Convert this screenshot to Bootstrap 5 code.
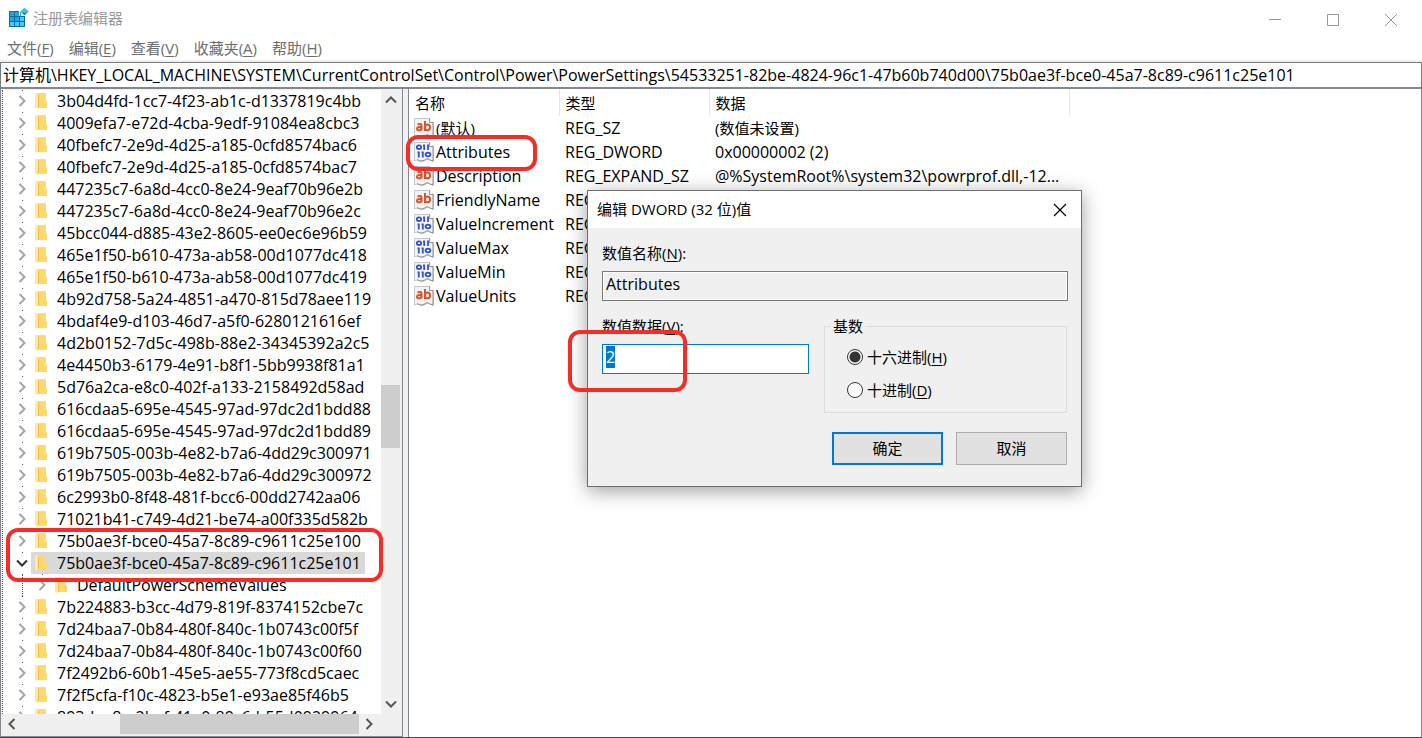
<!DOCTYPE html>
<html lang="zh-CN">
<head>
<meta charset="utf-8">
<meta name="viewport" content="width=device-width, initial-scale=1">
<title>注册表编辑器</title>
<link href="https://cdn.jsdelivr.net/npm/bootstrap@5.3.0/dist/css/bootstrap.min.css" rel="stylesheet">
<style>
  body { font-family: "Open Sans", "Noto Sans CJK SC", sans-serif; font-size: 15px; line-height: 22px; color: #000; background: #fff; }
  button { color: inherit; }
  u { text-underline-offset: 2px; }
  .title-row { height: 36px; padding: 0 2px 0 8px; color: #999; }
  .win-btn { width: 58px; height: 36px; border: 0; background: none; padding: 0; }
  .menu-row { height: 26px; padding-left: 7px; gap: 15px; border-bottom: 2px solid #f0f0f0; }
  .menu-row a { color: #6d6d6d; text-decoration: none; }
  .address { height: 27px; border: 1px solid #7a7a7a; border-bottom: 2px solid #828790; padding: 0 2px 2px; width: 100%; outline: 0; font-size: 16px; }
  .panes { background: #f0f0f0; gap: 5px; border-bottom: 1px solid #4a4c55; min-height: 0; }
  .tree-pane { flex: 0 0 403px; border: 1px solid #828790; border-top: 0; background: #f0f0f0; padding: 1px 1px 2px 1px; font-size: 16px; }
  .tree-body, .tree-view { min-height: 0; }
  .tree-view { background: #fff; border-left: 1px dotted #555; }
  .tree-item { height: 22px; flex: none; padding-left: 13px; position: relative; white-space: nowrap; }
  .tree-item::before { content: ""; position: absolute; left: 19px; top: 0; width: 1px; height: 1px; background: #555; }
  .tree-item.nested { padding-left: 33px; }
  .tree-item.nested::before { height: 22px; background: none; border-left: 1px dotted #555; }
  .tree-item.nested::after { content: ""; position: absolute; left: 39px; top: 0; width: 1px; height: 1px; background: #555; }
  .tree-item svg { flex: none; }
  .tree-label { margin-left: 6px; padding: 0 4px; }
  .tree-node { height: 22px; padding-left: 4px; margin-left: 3px; }
  .tree-node.chosen { background: #d9d9d9; }
  .bar-v { width: 19px; margin-right: 1px; }
  .bar-h { height: 20px; margin-right: 23px; }
  .arrow-btn { border: 0; background: none; padding: 0; width: 19px; height: 20px; display: grid; place-items: center; flex: none; }
  .thumb { background: #cdcdcd; }
  .list-pane { border-left: 1px solid #828790; border-right: 1px solid #828790; background: #fff; min-width: 0; }
  .values { table-layout: fixed; width: 100%; }
  .values th { font-weight: 400; height: 27px; padding: 1px 6px 0; border-right: 1px solid #e5e5e5; }
  .values th:last-child { border-right: 0; }
  .values td { height: 24px; padding: 0 6px; white-space: nowrap; font-size: 16px; }
  .values td:first-child { padding: 0 5px; }
  .values td.cn { font-size: 15px; }
  .values svg { margin-right: 2px; flex: none; }
  .ring { position: absolute; border: 4px solid #f42d27; border-radius: 12px; pointer-events: none; z-index: 5; }
  .ring-tree { left: 5px; top: 439px; width: 377px; height: 54px; }
  .ring-row { left: -3px; top: 46px; width: 131px; height: 36px; }
  .ring-data { left: -20px; top: 139px; width: 119px; height: 62px; }
  .dlg { position: absolute; left: 178px; top: 101px; width: 495px; background: #f0f0f0; border: 1px solid #6e6e6e; box-shadow: 0 4px 18px rgba(0,0,0,.38); z-index: 3; }
  .dlg-title { height: 37px; background: #fff; padding: 0 0 2px 9px; }
  .dlg-close { width: 43px; height: 34px; border: 0; background: none; padding: 0; }
  .dlg-body { padding: 14px 13px 21px 14px; }
  .box { display: block; width: 100%; height: 30px; margin-top: 7px; border: 1px solid #7a7a7a; padding: 0 3px 4px; border-radius: 0; outline: 0; font-size: 16px; }
  .box-name { background: #f0f0f0; box-shadow: inset 0 0 0 1px #fff; }
  .box-data { border-color: #0078d7; background: #fff; color: #000; }
  .box-data::selection { background: #0078d7; color: #fff; }
  .data-row { margin-top: 14px; padding-right: 1px; }
  .data-col { width: 207px; }
  .radix { width: 243px; height: 98px; border: 1px solid #dcdcdc; padding: 3px 22px 0; }
  .radix legend { float: none; width: auto; font-size: 15px; line-height: 22px; margin: 0 0 0 -16px; padding: 0 2px; }
  .radix label { height: 33px; display: flex; align-items: center; gap: 4px; }
  .radix input { appearance: none; width: 16px; height: 16px; margin: 0; border: 1px solid #333; border-radius: 50%; background: #fff; }
  .radix input:checked { background: radial-gradient(circle, #333 5px, #fff 6px); }
  .push-row { margin-top: 19px; gap: 13px; padding-right: 1px; }
  .push { width: 111px; height: 33px; border: 1px solid #adadad; background: #e1e1e1; padding: 0 0 2px; }
  .push-main { border: 2px solid #0078d7; }
</style>
</head>
<body>
<svg class="d-none">
  <symbol id="i-right" viewBox="0 0 9 12"><path d="M1.500 1l5 5-5 5" fill="none" stroke="#a6a6a6" stroke-width="2"/></symbol>
  <symbol id="i-folder" viewBox="0 0 12 18"><path d="M3 1h8v8.500h1V16H3z" fill="#ffd96b"/><path d="M0 1h3l1 2v12l-2 2-2-1z" fill="#ffe9a2"/><path d="M3 3l1-1v13l-1 1z" fill="#e9bd52"/></symbol>
  <symbol id="i-paper" viewBox="0 0 20 20"><path d="M.5.500h15l4 4v15l-3-1-3-1.500-3 2-4 .5-3-1.500-3 1z" fill="#f4f4f4" stroke="#c3c7ca"/><path d="M15.500.500v4h4" fill="#fff" stroke="#8e959b"/><path d="M19 5v14l-3-1-3-1.500-3 2-4 .5-3-1.500" fill="none" stroke="#8f959a"/></symbol>
  <symbol id="i-text" viewBox="0 0 20 20"><use href="#i-paper"/><g fill="none" stroke="#d9532c" stroke-width="2"><path d="M3.500 6.500q4-1.500 4 1v5M7.500 9q-4.500-.3-4.500 1.700t2.500 1.500q2-.5 2-2.500M11 3v10M11 8q1-1.800 3-1.500 2 .5 2 2.900T14 12.300q-2 .2-3-1.300"/></g></symbol>
  <symbol id="i-bin" viewBox="0 0 20 20"><use href="#i-paper"/><g fill="none" stroke="#2f50d8" stroke-width="1.800"><ellipse cx="5" cy="5.200" rx="2.200" ry="1.800"/><path d="M10.200 2.500v5.500M14 2.500v5.500M9 3.400h1M13 3.400h1M4.800 9.500v6M8.800 9.500v6M3.500 10.400h1M7.500 10.400h1"/><ellipse cx="14" cy="12.500" rx="2.400" ry="1.900"/></g></symbol>
</svg>

<div class="d-flex flex-column vh-100 overflow-hidden">
  <header>
    <div class="title-row d-flex align-items-center">
      <svg width="21" height="22" viewBox="0 0 21 22"><path d="M1 4h16v16H1z" fill="#0a6e9e"/><path d="M2 5h4v4H2zM7 5h4v4H7zM2 10h4v4H2zM7 10h4v4H7z" fill="#22a7e0"/><path d="M2 15h4v4H2zM7 15h4v4H7zM12 10h4v4h-4zM12 15h4v4h-4z" fill="#4cc9f5"/><path d="M11 1h6v8h-6z" fill="#fff"/><path d="M12 5h1v4h-1z" fill="#29a9dc"/><path d="M16.500 1l4 3.500-4 4-4-4z" fill="#1c86b8"/><path d="M16.500 1l4 3.500-4 1.500-4-1.500z" fill="#4fbde6"/></svg>
      <span class="me-auto ps-1">注册表编辑器</span>
      <button class="win-btn" aria-label="最小化"><svg width="14" height="14"><path d="M1 6.500h12" stroke="#999"/></svg></button>
      <button class="win-btn" aria-label="最大化"><svg width="14" height="14"><path d="M1.500 1.500h11v11h-11z" fill="none" stroke="#999"/></svg></button>
      <button class="win-btn" aria-label="关闭"><svg width="14" height="14"><path d="M1 1l12 12M13 1L1 13" stroke="#999"/></svg></button>
    </div>
    <nav class="menu-row d-flex align-items-center">
      <a href="#">文件(<u>F</u>)</a><a href="#">编辑(<u>E</u>)</a><a href="#">查看(<u>V</u>)</a><a href="#">收藏夹(<u>A</u>)</a><a href="#">帮助(<u>H</u>)</a>
    </nav>
    <input class="address d-block" type="text" aria-label="地址" value="计算机\HKEY_LOCAL_MACHINE\SYSTEM\CurrentControlSet\Control\Power\PowerSettings\54533251-82be-4824-96c1-47b60b740d00\75b0ae3f-bce0-45a7-8c89-c9611c25e101">
  </header>

  <main class="panes d-flex flex-grow-1">
    <section class="tree-pane d-flex flex-column position-relative">
      <div class="tree-body d-flex flex-grow-1">
        <div class="tree-view flex-grow-1 d-flex flex-column overflow-hidden" id="tree" role="tree"></div>
        <div class="bar-v d-flex flex-column">
          <button class="arrow-btn" aria-label="向上"><svg width="12" height="8"><path d="M1 6.500l5-5 5 5" fill="none" stroke="#555" stroke-width="2"/></svg></button>
          <div style="flex:275"></div><div class="thumb" style="flex:62"></div><div style="flex:246"></div>
          <button class="arrow-btn" aria-label="向下"><svg width="12" height="8"><path d="M1 1.500l5 5 5-5" fill="none" stroke="#555" stroke-width="2"/></svg></button>
        </div>
      </div>
      <div class="bar-h d-flex">
        <button class="arrow-btn" aria-label="向左"><svg width="8" height="12"><path d="M6.500 1l-5 5 5 5" fill="none" stroke="#555" stroke-width="2"/></svg></button>
        <div style="flex:99"></div><div class="thumb" style="flex:239"></div>
        <button class="arrow-btn" aria-label="向右"><svg width="8" height="12"><path d="M1.500 1l5 5-5 5" fill="none" stroke="#555" stroke-width="2"/></svg></button>
      </div>
      <div class="ring ring-tree"></div>
    </section>

    <section class="list-pane flex-grow-1 position-relative">
      <table class="values">
        <colgroup><col style="width:150px"><col style="width:150px"><col style="width:360px"><col></colgroup>
        <thead><tr><th>名称</th><th>类型</th><th>数据</th><th></th></tr></thead>
        <tbody id="rows"></tbody>
      </table>
      <div class="ring ring-row"></div>

      <form class="dlg" onsubmit="return false">
        <div class="dlg-title d-flex align-items-center justify-content-between">
          <span>编辑 DWORD (32 位)值</span>
          <button type="button" class="dlg-close" aria-label="关闭"><svg width="14" height="14"><path d="M1 1l12 12M13 1L1 13" stroke="#000" stroke-width="1.200"/></svg></button>
        </div>
        <div class="dlg-body">
          <label class="d-block" for="vname">数值名称(<u>N</u>):</label>
          <input class="box box-name" id="vname" type="text" value="Attributes" readonly>
          <div class="data-row d-flex justify-content-between">
            <div class="data-col">
              <label class="d-block" for="vdata">数值数据(<u>V</u>):</label>
              <input class="box box-data" id="vdata" type="text" value="2">
            </div>
            <fieldset class="radix">
              <legend>基数</legend>
              <label><input type="radio" name="base" checked><span>十六进制(<u>H</u>)</span></label>
              <label><input type="radio" name="base"><span>十进制(<u>D</u>)</span></label>
            </fieldset>
          </div>
          <div class="push-row d-flex justify-content-end">
            <button class="push push-main">确定</button><button type="button" class="push">取消</button>
          </div>
        </div>
        <div class="ring ring-data"></div>
      </form>
    </section>
  </main>
</div>
<script src="https://cdn.jsdelivr.net/npm/bootstrap@5.3.0/dist/js/bootstrap.bundle.min.js"></script>
<script>
  const keys = ["3b04d4fd-1cc7-4f23-ab1c-d1337819c4bb","4009efa7-e72d-4cba-9edf-91084ea8cbc3","40fbefc7-2e9d-4d25-a185-0cfd8574bac6","40fbefc7-2e9d-4d25-a185-0cfd8574bac7","447235c7-6a8d-4cc0-8e24-9eaf70b96e2b","447235c7-6a8d-4cc0-8e24-9eaf70b96e2c","45bcc044-d885-43e2-8605-ee0ec6e96b59","465e1f50-b610-473a-ab58-00d1077dc418","465e1f50-b610-473a-ab58-00d1077dc419","4b92d758-5a24-4851-a470-815d78aee119","4bdaf4e9-d103-46d7-a5f0-6280121616ef","4d2b0152-7d5c-498b-88e2-34345392a2c5","4e4450b3-6179-4e91-b8f1-5bb9938f81a1","5d76a2ca-e8c0-402f-a133-2158492d58ad","616cdaa5-695e-4545-97ad-97dc2d1bdd88","616cdaa5-695e-4545-97ad-97dc2d1bdd89","619b7505-003b-4e82-b7a6-4dd29c300971","619b7505-003b-4e82-b7a6-4dd29c300972","6c2993b0-8f48-481f-bcc6-00dd2742aa06","71021b41-c749-4d21-be74-a00f335d582b","75b0ae3f-bce0-45a7-8c89-c9611c25e100","75b0ae3f-bce0-45a7-8c89-c9611c25e101","DefaultPowerSchemeValues","7b224883-b3cc-4d79-819f-8374152cbe7c","7d24baa7-0b84-480f-840c-1b0743c00f5f","7d24baa7-0b84-480f-840c-1b0743c00f60","7f2492b6-60b1-45e5-ae55-773f8cd5caec","7f2f5cfa-f10c-4823-b5e1-e93ae85f46b5","893dee8e-2bef-41e0-89c6-b55d0929964c"];
  document.getElementById("tree").innerHTML = keys.map((k, i) => {
    const open = i === 21;
    const arrow = open
      ? '<svg width="12" height="12"><path d="M1 3.500l5 5 5-5" fill="none" stroke="#333" stroke-width="2"/></svg>'
      : '<svg width="12" height="12"><use href="#i-right" x="2" width="9" height="12"/></svg>';
    return `<div class="tree-item d-flex align-items-center ${k[0] === "D" ? "nested" : ""}" role="treeitem">${arrow}<div class="tree-node d-flex align-items-center ${open ? "chosen" : ""}"><svg width="12" height="18"><use href="#i-folder"/></svg><span class="tree-label">${k}</span></div></div>`;
  }).join("");

  const values = [["text","(默认)","REG_SZ","(数值未设置)"],["bin","Attributes","REG_DWORD","0x00000002 (2)"],["text","Description","REG_EXPAND_SZ","@%SystemRoot%\\system32\\powrprof.dll,-12..."],["text","FriendlyName","REG_EXPAND_SZ",""],["bin","ValueIncrement","REG_DWORD",""],["bin","ValueMax","REG_DWORD",""],["bin","ValueMin","REG_DWORD",""],["text","ValueUnits","REG_EXPAND_SZ",""]];
  const cn = s => /[\u4e00-\u9fff]/.test(s) ? "cn" : "";
  document.getElementById("rows").innerHTML = values.map(v =>
    `<tr><td class="${cn(v[1])}"><div class="d-flex align-items-center"><svg width="20" height="20"><use href="#i-${v[0]}"/></svg>${v[1]}</div></td><td>${v[2]}</td><td class="${cn(v[3])}">${v[3]}</td><td></td></tr>`).join("");

  const data = document.getElementById("vdata");
  data.focus();
  data.select();
</script>
</body>
</html>
